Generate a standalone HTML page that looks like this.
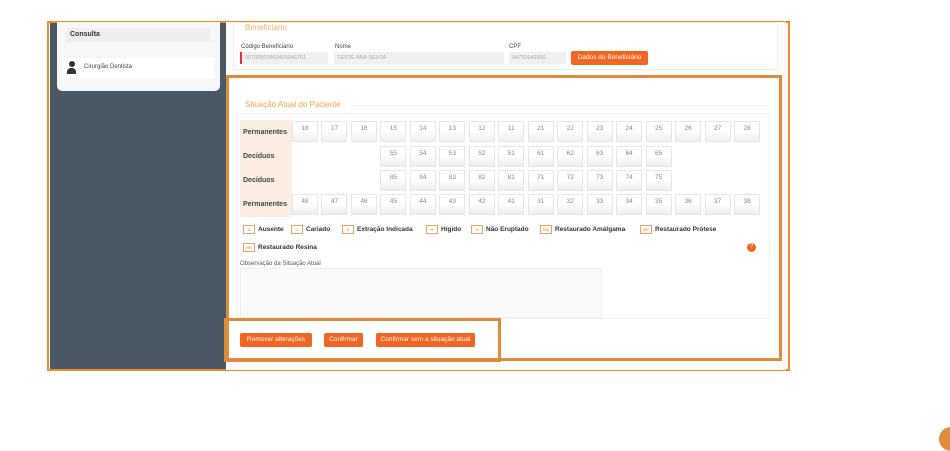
<!DOCTYPE html><html><head><style>
*{margin:0;padding:0;box-sizing:border-box}
body{width:950px;height:433px;background:#fff;position:relative;overflow:hidden;font-family:"Liberation Sans",sans-serif;font-size:7px;color:#555}
.a{position:absolute}
.cell{position:absolute;width:26px;height:21px;border:1px solid #e6e6e6;background:linear-gradient(#fff 45%,#eee);text-align:center;font-size:6.5px;color:#888;padding-top:3px}
.lbl{position:absolute;left:240px;width:52px;background:#fbeee0;font-weight:bold;font-size:7px;color:#444;padding-left:3px}
.btn{position:absolute;background:#f26522;color:#fff;font-size:6.5px;border-radius:2px;text-align:center;line-height:14px;height:14px}
.lg{display:inline-block;border:1.5px solid #f0a060;width:12px;height:9px;vertical-align:middle;margin-right:3px;font-size:4px;color:#f0a060;text-align:center;line-height:7px}
.leg{position:absolute;font-weight:bold;font-size:6.5px;color:#333}
</style></head><body>
<div class="a" style="left:47px;top:21px;width:743px;height:350px;border:2px solid #f08a24"></div>
<div class="a" style="left:50px;top:23px;width:176px;height:346px;background:#4a5866"></div>
<div class="a" style="left:57px;top:22px;width:163px;height:69px;background:#f7f7f7;border-radius:0 0 5px 5px"></div>
<div class="a" style="left:66px;top:28px;width:144px;height:14px;background:#eee;font-weight:bold;font-size:7px;color:#333;padding:3px 4px">Consulta</div>
<div class="a" style="left:62px;top:58px;width:152px;height:20px;background:#fff;font-size:6px;color:#444;padding:6px 0 0 22px">Cirurgião Dentista</div>
<div class="a" style="left:67px;top:61px;width:9px;height:13px"><div style="width:6px;height:6px;border-radius:3px;background:#333;margin:0 auto"></div><div style="width:9px;height:6px;border-radius:4px 4px 0 0;background:#333;margin-top:1px"></div></div>
<div class="a" style="left:226px;top:22px;width:560px;height:348px;background:#fdfdfd"></div>
<div class="a" style="left:233px;top:22px;width:545px;height:48px;background:#fff;border:1px solid #eee"></div>
<div class="a" style="left:245px;top:23px;color:#f5b070;font-size:8px">Beneficiario</div>
<div class="a" style="left:241px;top:44px;font-size:6px;color:#444">Código Beneficiario</div>
<div class="a" style="left:335px;top:44px;font-size:6px;color:#444">Nome</div>
<div class="a" style="left:509px;top:44px;font-size:6px;color:#444">CPF</div>
<div class="a" style="left:240px;top:52px;width:88px;height:12px;background:#f0f0f0;border-left:2px solid #d33;font-size:5.5px;color:#aaa;padding:3px 3px">00702503800400046701</div>
<div class="a" style="left:334px;top:52px;width:170px;height:12px;background:#f0f0f0;font-size:5.5px;color:#aaa;padding:3px 3px">TESTE ANA SEXTA</div>
<div class="a" style="left:509px;top:52px;width:57px;height:12px;background:#f0f0f0;font-size:5.5px;color:#aaa;padding:3px 3px">04731642990</div>
<div class="btn" style="left:571px;top:51px;width:77px">Dados do Beneficiário</div>
<div class="a" style="left:226px;top:75px;width:556px;height:286px;border:3px solid #e08a3c;background:#fff"></div>
<div class="a" style="left:245px;top:100px;color:#f5a050;font-size:8px">Situação Atual do Paciente</div>
<div class="a" style="left:350px;top:105px;width:418px;height:1px;background:#eee"></div>
<div class="a" style="left:237px;top:113px;width:533px;height:206px;border:1px solid #f0f0f0"></div>
<div class="lbl" style="top:120px;height:25px;line-height:25px">Permanentes</div>
<div class="lbl" style="top:145px;height:24px;line-height:24px">Decíduos</div>
<div class="lbl" style="top:169px;height:24px;line-height:24px">Decíduos</div>
<div class="lbl" style="top:193px;height:24px;line-height:24px">Permanentes</div>
<div id="g"></div>
<div class="leg" style="left:243px;top:225px"><span class="lg">A</span>Ausente</div>
<div class="leg" style="left:291px;top:225px"><span class="lg">C</span>Cariado</div>
<div class="leg" style="left:342px;top:225px"><span class="lg">E</span>Extração Indicada</div>
<div class="leg" style="left:426px;top:225px"><span class="lg">H</span>Hígido</div>
<div class="leg" style="left:471px;top:225px"><span class="lg">N</span>Não Eruptado</div>
<div class="leg" style="left:540px;top:225px"><span class="lg">RA</span>Restaurado Amálgama</div>
<div class="leg" style="left:640px;top:225px"><span class="lg">RP</span>Restaurado Prótese</div>
<div class="leg" style="left:243px;top:243px"><span class="lg">RR</span>Restaurado Resina</div>
<div class="a" style="left:747px;top:243px;width:9px;height:9px;border-radius:5px;background:#f26522;color:#fff;font-size:6px;text-align:center;line-height:9px">?</div>
<div class="a" style="left:240px;top:261px;font-size:6px;color:#555">Observação da Situação Atual</div>
<div class="a" style="left:240px;top:268px;width:362px;height:50px;border:1px solid #eee;background:#fafafa"></div>
<div class="a" style="left:224px;top:318px;width:277px;height:44px;border:3px solid #e08a3c"></div>
<div class="btn" style="left:240px;top:333px;width:72px">Remover alterações</div>
<div class="btn" style="left:324px;top:333px;width:39px">Confirmar</div>
<div class="btn" style="left:376px;top:333px;width:99px">Confirmar sem a situação atual</div>
<div class="a" style="left:939px;top:427px;width:24px;height:24px;border-radius:12px;background:#e08a3c"></div>
<script>
var r=[[18,17,16,15,14,13,12,11,21,22,23,24,25,26,27,28],[0,0,0,55,54,53,52,51,61,62,63,64,65,0,0,0],[0,0,0,85,84,83,82,81,71,72,73,74,75,0,0,0],[48,47,46,45,44,43,42,41,31,32,33,34,35,36,37,38]];
var t=[121,146,170,194],h='';
r.forEach(function(row,i){row.forEach(function(n,j){if(n)h+='<div class="cell" style="left:'+(292+j*29.47)+'px;top:'+t[i]+'px">'+n+'</div>';});});
document.getElementById('g').innerHTML=h;
</script>
</body></html>
